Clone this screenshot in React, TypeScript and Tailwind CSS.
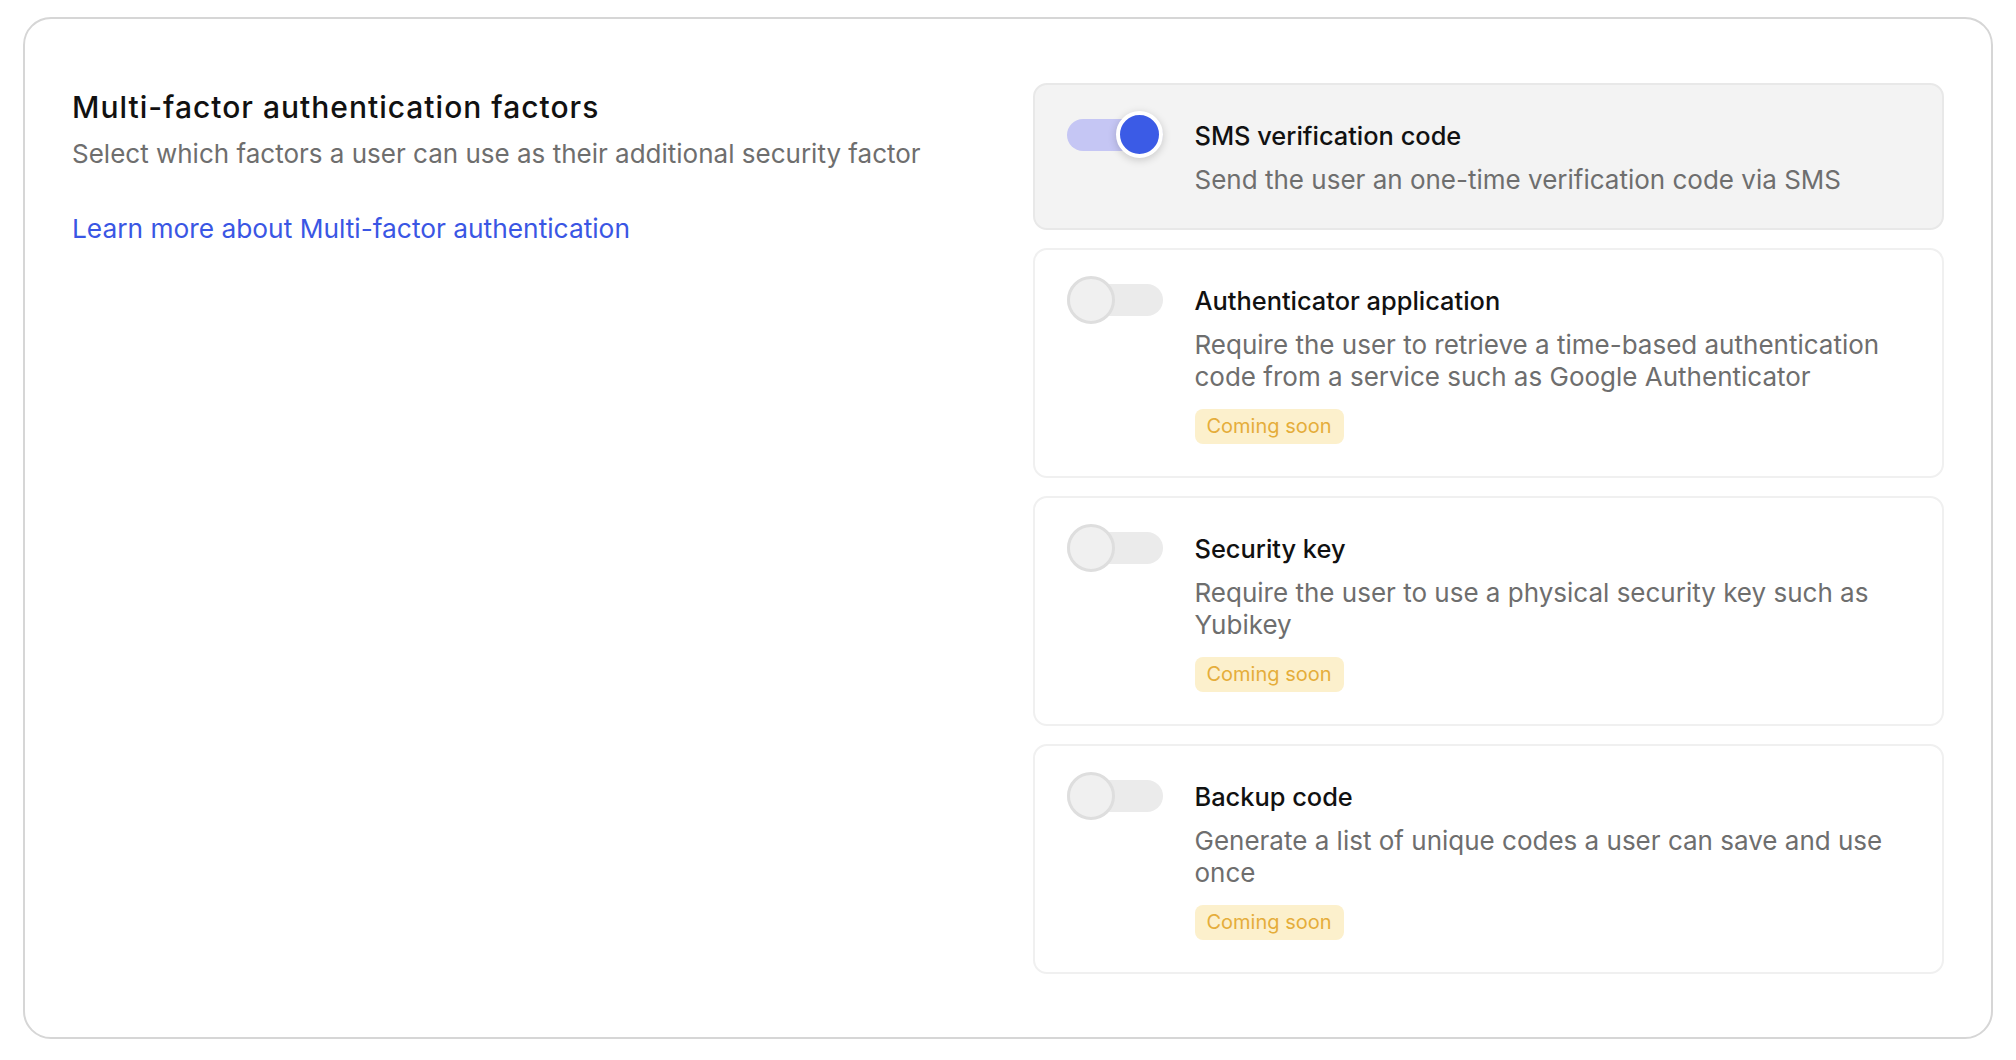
import React, { useState } from 'react';

interface Factor {
  id: string;
  title: string;
  description: string;
  comingSoon: boolean;
}

const factors: Factor[] = [
  {
    id: 'sms',
    title: 'SMS verification code',
    description: 'Send the user an one-time verification code via SMS',
    comingSoon: false,
  },
  {
    id: 'totp',
    title: 'Authenticator application',
    description:
      'Require the user to retrieve a time-based authentication code from a service such as Google Authenticator',
    comingSoon: true,
  },
  {
    id: 'key',
    title: 'Security key',
    description: 'Require the user to use a physical security key such as Yubikey',
    comingSoon: true,
  },
  {
    id: 'backup',
    title: 'Backup code',
    description: 'Generate a list of unique codes a user can save and use once',
    comingSoon: true,
  },
];

const Toggle: React.FC<{ on: boolean; onClick: () => void; disabled?: boolean }> = ({
  on,
  onClick,
  disabled,
}) => (
  <button
    type="button"
    onClick={onClick}
    disabled={disabled}
    className="relative w-[96px] h-[48px] shrink-0 flex items-center"
  >
    <span
      className={`block w-full h-[32px] rounded-full ${on ? 'bg-[#c5c6f4]' : 'bg-[#ebebeb]'}`}
    />
    {on ? (
      <span className="absolute right-0 top-0 w-[47px] h-[47px] rounded-full bg-[#3b5be6] border-[4px] border-white shadow-[0_2px_8px_rgba(0,0,0,0.18)]" />
    ) : (
      <span className="absolute left-0 top-0 w-[48px] h-[48px] rounded-full bg-[#f0f0f0] border-[3px] border-[#dedede]" />
    )}
  </button>
);

const App: React.FC = () => {
  const [enabled, setEnabled] = useState<string[]>(['sms']);

  const toggle = (id: string) => {
    setEnabled((prev) => (prev.includes(id) ? prev.filter((f) => f !== id) : [...prev, id]));
  };

  return (
    <div
      className="w-[2016px] h-[1060px] bg-white pl-[23px] pr-[23px] pt-[17px]"
      style={{ fontFamily: 'Inter, "Noto Sans", sans-serif' }}
    >
      <div className="h-[1022px] rounded-[28px] border-2 border-[#d6d6d6] px-[47px] py-[64px]">
        <div className="grid grid-cols-2 gap-[49px]">
          {/* left column */}
          <div>
            <h2 className="text-[30px] leading-[48px] font-medium tracking-[1px] text-[#111111]">
              Multi-factor authentication factors
            </h2>
            <p className="mt-[7px] text-[26px] leading-[32px] text-[#6e6e6e]">
              Select which factors a user can use as their additional security factor
            </p>
            <a href="#" className="block mt-[43px] text-[26.3px] leading-[32px] text-[#3a56e4]">
              Learn more about Multi-factor authentication
            </a>
          </div>

          {/* right column */}
          <div className="flex flex-col gap-[18px]">
            {factors.map((f) => {
              const on = enabled.includes(f.id);
              return (
                <div
                  key={f.id}
                  className={`flex gap-[32px] rounded-[14px] border-2 pl-[32px] pr-[32px] pt-[26px] pb-[32px] ${
                    on ? 'bg-[#f3f3f3] border-[#e8e8e8]' : 'bg-white border-[#f0f0f0]'
                  }`}
                >
                  <Toggle on={on} onClick={() => toggle(f.id)} disabled={f.comingSoon} />
                  <div className="flex-1 pt-[8px]">
                    <div className="text-[25.4px] leading-[34px] font-medium text-[#111111]">
                      {f.title}
                    </div>
                    <p className="mt-[11px] text-[26px] leading-[32px] text-[#6e6e6e]">
                      {f.description}
                    </p>
                    {f.comingSoon && (
                      <span className="inline-block mt-[16px] rounded-[8px] bg-[#fcf0cc] px-[12px] text-[20px] leading-[35px] text-[#e5ad3a]">
                        Coming soon
                      </span>
                    )}
                  </div>
                </div>
              );
            })}
          </div>
        </div>
      </div>
    </div>
  );
};

export default App;
